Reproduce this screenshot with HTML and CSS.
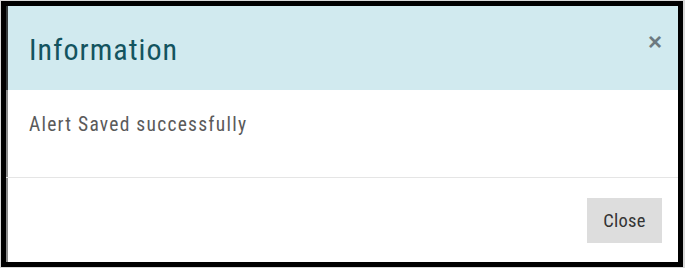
FILE: index.html
```html
<!DOCTYPE html>
<html lang="en">
<head>
    <meta charset="UTF-8">
    <title>Information</title>
    <link rel="stylesheet" href="styles.css">
</head>
<body>
    <div class="modal">
        <div class="modal-header">
            <h4 class="modal-title">Information</h4>
            <button type="button" class="close-x">&times;</button>
        </div>
        <div class="modal-body">
            Alert Saved successfully
        </div>
        <div class="modal-footer">
            <button type="button" class="close-btn">Close</button>
        </div>
    </div>
</body>
</html>
```

FILE: styles.css
```css
* {
    margin: 0;
    padding: 0;
    box-sizing: border-box;
}

body {
    font-family: "Roboto Condensed", Roboto, "Liberation Sans", sans-serif;
    background: #d9d9d9;
    padding: 1px 2px 1px 1px;
    width: 685px;
    height: 268px;
}

.modal {
    background: #ffffff;
    border: 5px solid #000000;
    height: 266px;
    display: flex;
    flex-direction: column;
    box-shadow: inset 2px 0 0 rgba(0, 0, 0, 0.45);
}

.modal-header {
    height: 84px;
    background: #d1eaef;
    display: flex;
    align-items: center;
    justify-content: space-between;
    padding: 0 16px 0 23px;
    box-shadow: inset 2px 0 0 rgba(0, 0, 0, 0.75);
}

.modal-title {
    font-size: 30px;
    font-weight: 400;
    color: #13545f;
    letter-spacing: 1px;
    margin-top: 2px;
}

.close-x {
    border: none;
    background: none;
    font-family: "Liberation Sans", Arial, sans-serif;
    font-size: 24px;
    font-weight: 700;
    color: #6c7a80;
    line-height: 1;
    margin-top: -12px;
    cursor: pointer;
}

.modal-body {
    height: 88px;
    padding: 23px 23px 0 23px;
    font-size: 19.5px;
    letter-spacing: 1.25px;
    color: #5a5a5a;
    border-bottom: 1px solid #e5e5e5;
}

.modal-footer {
    flex: 1;
    display: flex;
    justify-content: flex-end;
    align-items: flex-start;
    padding: 20px 16px 0 0;
}

.close-btn {
    width: 75px;
    height: 45px;
    border: none;
    background: #dddddd;
    color: #333333;
    font-family: "Roboto Condensed", Roboto, "Liberation Sans", sans-serif;
    font-size: 18.5px;
    letter-spacing: 0.3px;
    cursor: pointer;
}
```
